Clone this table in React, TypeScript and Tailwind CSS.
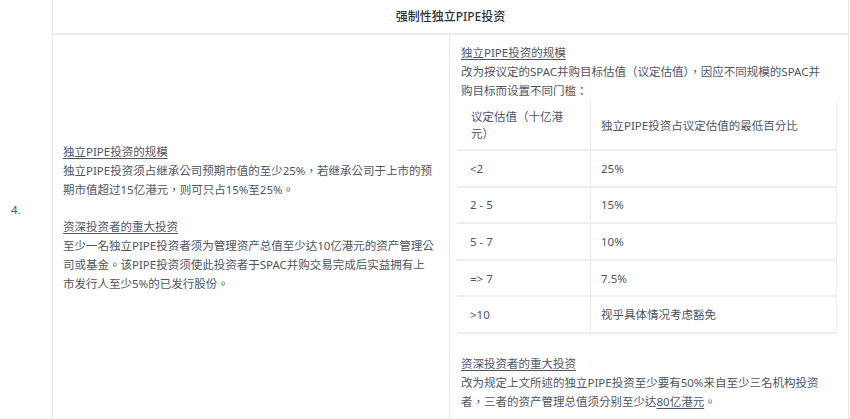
import React from "react";

const font = { fontFamily: '"Noto Sans", "Noto Sans CJK TC", sans-serif' };

export default function App() {
  const rows: [string, string][] = [
    ["<2", "25%"],
    ["2 - 5", "15%"],
    ["5 - 7", "10%"],
    ["=> 7", "7.5%"],
    [">10", "视乎具体情况考虑豁免"],
  ];
  return (
    <div lang="zh-Hant" className="w-[850px] h-[419px] overflow-hidden bg-white flex text-[11.5px] leading-[19px] text-[#4f5563]" style={font}>
      <div className="w-[52px] shrink-0 flex items-center pl-[11px] pt-[0px]">
        <span>4.</span>
      </div>
      <div className="w-[797px] flex flex-col border-l border-[#e6e6e6] border-r">
        <div className="h-[35px] shrink-0 border-b-2 border-[#ececec] flex items-center justify-center font-medium text-[#2f3136] text-[12px]">
          强制性独立PIPE投资
        </div>
        <div className="flex flex-1">
          <div className="w-[397px] shrink-0 border-r border-[#e6e6e6] pl-[10px] pr-[12px] pt-[107px]">
            <div className="underline underline-offset-2">独立PIPE投资的规模</div>
            <div>独立PIPE投资须占继承公司预期市值的至少25%，若继承公司于上市的预期市值超过15亿港元，则可只占15%至25%。</div>
            <div className="h-[18px]" />
            <div className="underline underline-offset-2">资深投资者的重大投资</div>
            <div>
              至少一名独立PIPE投资者须为管理资产总值至少达10亿港元的资产管理公司或基金。该PIPE投资须使此投资者于SPAC并购交易完成后实益拥有上
              <br />
              市发行人至少5%的已发行股份。
            </div>
          </div>
          <div className="flex-1 pl-[11px] pr-[12px] pt-[8px]">
            <div className="underline underline-offset-2">独立PIPE投资的规模</div>
            <div className="pr-[16px]">改为按议定的SPAC并购目标估值（议定估值），因应不同规模的SPAC并购目标而设置不同门槛：</div>
            <div className="ml-[-4px] w-[380px] mt-[1px]">
              <div className="flex h-[50px] border-b-2 border-[#eeeeee]">
                <div className="w-[134px] shrink-0 border-r border-[#e6e6e6] pl-[14px] pr-[24px] flex items-center leading-[17px]">
                  议定估值（十亿港元）
                </div>
                <div className="flex-1 border-r border-[#eeeeee] pl-[10px] flex items-center">
                  独立PIPE投资占议定估值的最低百分比
                </div>
              </div>
              {rows.map(([a, b], i) => (
                <div key={i} className="flex h-[36.6px] border-b-2 border-[#eeeeee]">
                  <div className="w-[134px] shrink-0 border-r border-[#e6e6e6] pl-[13px] flex items-center">{a}</div>
                  <div className="flex-1 border-r border-[#eeeeee] pl-[10px] flex items-center">{b}</div>
                </div>
              ))}
            </div>
            <div className="mt-[20px] underline underline-offset-2">资深投资者的重大投资</div>
            <div className="pr-[16px]">
              改为规定上文所述的独立PIPE投资至少要有50%来自至少三名机构投资者，三者的资产管理总值须分别至少达<span className="underline underline-offset-2">80亿港元</span>。
            </div>
          </div>
        </div>
      </div>
    </div>
  );
}
